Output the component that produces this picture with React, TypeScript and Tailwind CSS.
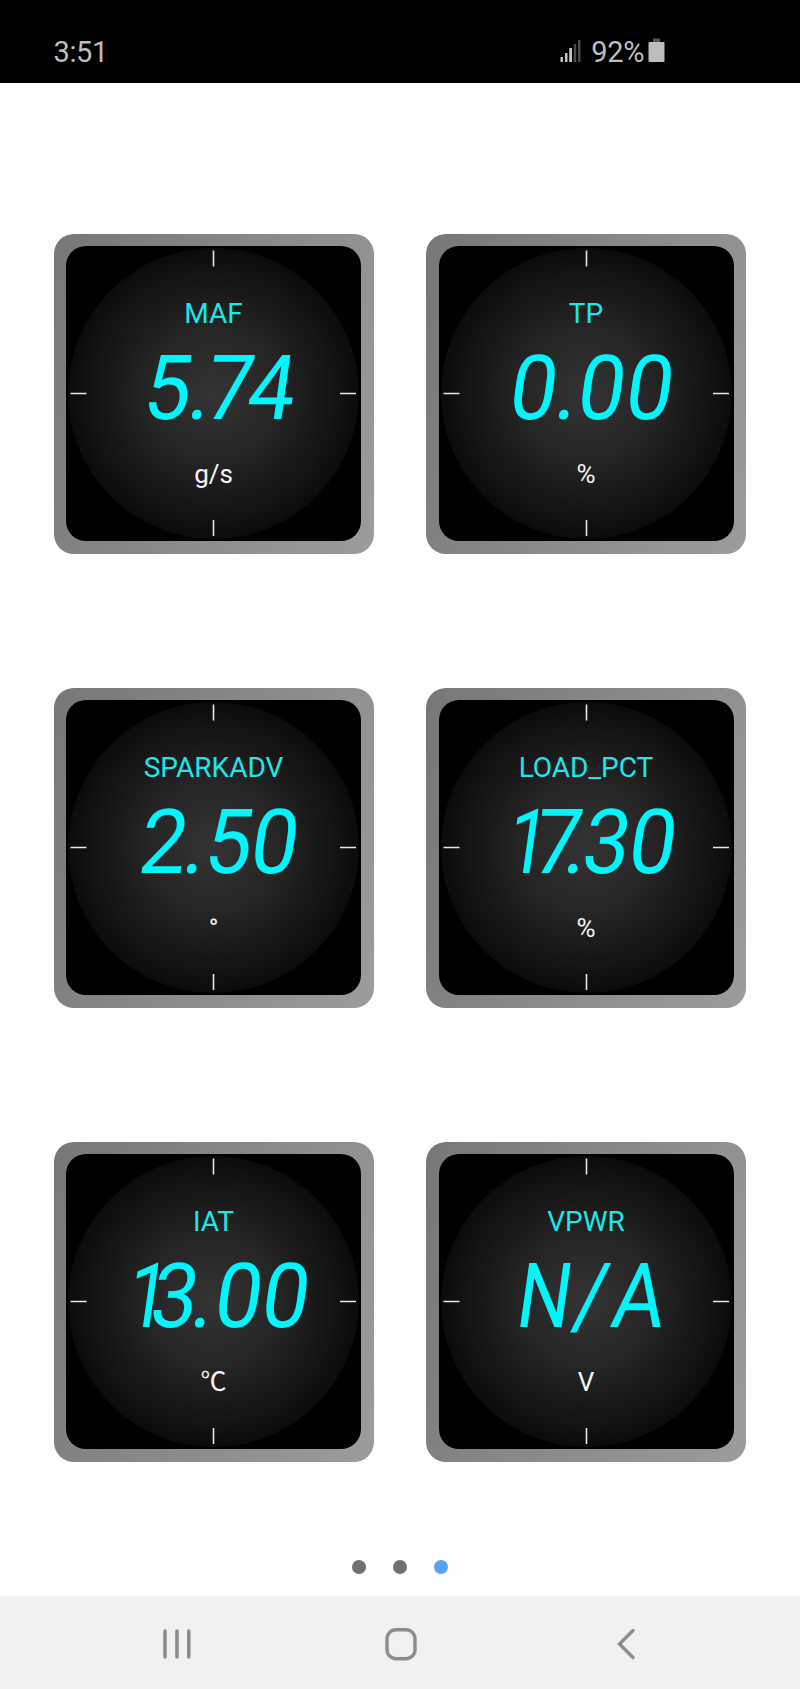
interface Glyph {
  char: string;
  advance: number;
}

interface Gauge {
  label: string;
  unit: string;
  reading: Glyph[];
}

// advance = distance from the previous glyph's centre (or from the card's edge)
const gauges: Gauge[] = [
  {
    label: 'MAF',
    unit: 'g/s',
    reading: [
      { char: '5', advance: 114.5 },
      { char: '.', advance: 32 },
      { char: '7', advance: 30 },
      { char: '4', advance: 42 },
    ],
  },
  {
    label: 'TP',
    unit: '%',
    reading: [
      { char: '0', advance: 108.5 },
      { char: '.', advance: 33 },
      { char: '0', advance: 35 },
      { char: '0', advance: 47.5 },
    ],
  },
  {
    label: 'SPARKADV',
    unit: '°',
    reading: [
      { char: '2', advance: 110 },
      { char: '.', advance: 31.5 },
      { char: '5', advance: 34 },
      { char: '0', advance: 45.5 },
    ],
  },
  {
    label: 'LOAD_PCT',
    unit: '%',
    reading: [
      { char: '1', advance: 102 },
      { char: '7', advance: 30 },
      { char: '.', advance: 18.5 },
      { char: '3', advance: 31 },
      { char: '0', advance: 46 },
    ],
  },
  {
    label: 'IAT',
    unit: '℃',
    reading: [
      { char: '1', advance: 94.5 },
      { char: '3', advance: 26.5 },
      { char: '.', advance: 29 },
      { char: '0', advance: 35 },
      { char: '0', advance: 47.5 },
    ],
  },
  {
    label: 'VPWR',
    unit: 'V',
    reading: [
      { char: 'N', advance: 119 },
      { char: '/', advance: 47 },
      { char: 'A', advance: 47 },
    ],
  },
];

const glyphScale: Record<string, string> = {
  '1': 'scale-x-80',
  N: 'scale-x-84',
  A: 'scale-x-90',
};

function StatusBar() {
  return (
    <header className="flex h-[83px] shrink-0 items-start justify-between bg-black pt-[35px] pr-[135px] pl-[53.5px] text-[#bdbdbd]">
      <span className="text-[29px] leading-[34px] tracking-[-0.4px]">3:51</span>
      <div className="flex items-start">
        <svg width="22" height="24" viewBox="0 0 22 24" className="mt-[4px] mr-[9px]">
          <rect x="0.5" y="18" width="2.5" height="5" fill="#c4c4c4" />
          <rect x="5" y="14" width="2.5" height="9" fill="#c4c4c4" />
          <rect x="9.2" y="9" width="2.8" height="14" fill="#c4c4c4" />
          <rect x="13.7" y="5" width="2.5" height="18" fill="#4a4a4a" />
          <rect x="18" y="1" width="2.5" height="22" fill="#4a4a4a" />
        </svg>
        <span className="text-[29px] leading-[34px] tracking-[-0.4px]">92%</span>
        <svg width="17" height="26" viewBox="0 0 17 26" className="mt-[3px] ml-[4px]">
          <rect x="5" y="0.5" width="7" height="4" fill="#555555" />
          <rect x="0.5" y="4" width="16" height="20" rx="1" fill="#bdbdbd" />
        </svg>
      </div>
    </header>
  );
}

function Ticks() {
  return (
    <svg className="absolute inset-0 size-full" viewBox="0 0 295 295" stroke="#e8e8e8" strokeWidth="1.6">
      <path d="M147.5 4.5v16M147.5 274v16M4.5 147.5h16M274 147.5h16" />
    </svg>
  );
}

function GaugeCard({ label, unit, reading }: Gauge) {
  return (
    <section className="size-[320px] rounded-[20px] bg-linear-110 from-[#777777] to-[#9c9c9c] p-[12.5px]">
      <div className="relative size-[295px] overflow-hidden rounded-[20px] bg-black p-[2px]">
        <div className="flex size-[291px] flex-col items-center rounded-full bg-[radial-gradient(circle_closest-side,#343434_0%,#252525_45%,#0b0b0b_100%)]">
          <h2 className="mt-[49px] text-[28px] leading-[34px] whitespace-nowrap text-[#1fe6e8]">{label}</h2>
          <div className="mt-[8px] flex h-[100px] w-[320px] shrink-0 -skew-x-8 text-[90px] leading-[100px] text-[#00f6fb]">
            {reading.map(({ char, advance }, i) => (
              <span key={i} className="flex w-0 justify-center" style={{ marginLeft: advance }}>
                <span className={glyphScale[char] ?? 'scale-x-93'}>{char}</span>
              </span>
            ))}
          </div>
          <p className="mt-[19px] text-[26px] leading-[32px] text-[#f4f4f4]">{unit}</p>
        </div>
        <Ticks />
      </div>
    </section>
  );
}

function Pager() {
  return (
    <div className="flex justify-center gap-[27px] pr-[1px]">
      <span className="size-[14px] rounded-full bg-[#717171]" />
      <span className="size-[14px] rounded-full bg-[#717171]" />
      <span className="size-[14px] rounded-full bg-[#55a5f7]" />
    </div>
  );
}

function NavBar() {
  return (
    <nav className="flex h-[93px] shrink-0 items-center bg-[#f1f1f1] pt-[3px] pl-[160px]">
      <svg width="34" height="34" viewBox="0 0 34 34" stroke="#8c8c8c" strokeWidth="3.6" strokeLinecap="round">
        <path d="M5 4v26M17 4v26M28.8 4v26" />
      </svg>
      <svg width="34" height="34" viewBox="0 0 34 34" fill="none" stroke="#8c8c8c" strokeWidth="3.4" className="ml-[189.5px]">
        <rect x="3" y="2.7" width="28" height="29" rx="9" />
      </svg>
      <svg width="20" height="34" viewBox="0 0 20 34" fill="none" stroke="#8c8c8c" strokeWidth="3.4" strokeLinecap="round" className="ml-[198px]">
        <path d="M17 3.5L3.5 17L17 30.5" />
      </svg>
    </nav>
  );
}

export default function App() {
  return (
    <div className="flex h-[1689px] w-[800px] flex-col overflow-hidden bg-[#fefefe] font-['Roboto','Noto_Sans_CJK_SC',sans-serif]">
      <StatusBar />
      <main className="flex flex-1 flex-col justify-between pt-[150.5px] pb-[22.5px]">
        <div className="ml-[53.5px] grid grid-cols-[320px_320px] gap-x-[52.5px] gap-y-[134px]">
          {gauges.map((gauge) => (
            <GaugeCard key={gauge.label} {...gauge} />
          ))}
        </div>
        <Pager />
      </main>
      <NavBar />
    </div>
  );
}
